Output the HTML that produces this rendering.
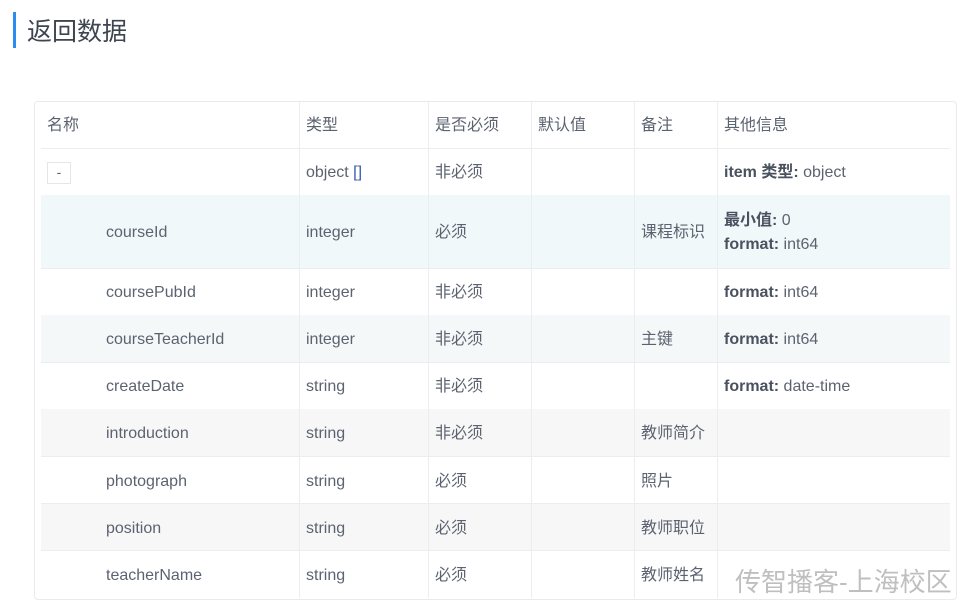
<!DOCTYPE html>
<html><head><meta charset="utf-8"><style>
body{margin:0;width:969px;height:604px;background:#fff;overflow:hidden;position:relative;font-family:"Liberation Sans","Noto Sans CJK SC",sans-serif;color:#5c6370;}
.bar{position:absolute;left:13px;top:12px;width:3px;height:36px;background:#2d8cf0;}
.title{position:absolute;left:27px;top:14px;font-size:25px;color:#3d4550;line-height:36px;}
.box{position:absolute;left:34px;top:101px;width:921px;height:497px;border:1px solid #e8eaec;border-radius:4px;}
.row{position:absolute;left:41px;width:909px;border-bottom:1px solid #ebedf0;}
.c{position:absolute;top:0;height:100%;display:flex;flex-direction:column;justify-content:center;font-size:16px;line-height:24px;white-space:nowrap;padding-top:3px;box-sizing:border-box;}
.vl{position:absolute;top:101px;height:497px;width:1px;background:#ebedf0;}
b{color:#4a5260;}
.btn{display:inline-block;width:22px;height:20px;border:1px solid #e4e6ea;text-align:center;line-height:18px;font-size:14px;}
</style></head><body>
<div class="bar"></div><div class="title">返回数据</div>
<div class="box"></div>

<div class="row" style="top:101px;height:47px"><div class="c" style="left:6px">名称</div><div class="c" style="left:265px">类型</div><div class="c" style="left:394px">是否必须</div><div class="c" style="left:497px">默认值</div><div class="c" style="left:600px">备注</div><div class="c" style="left:683px">其他信息</div></div>

<div class="row" style="top:148px;height:47px"><div class="c" style="left:6px"><div><span class="btn">-</span></div></div><div class="c" style="left:265px"><div>object <span style="color:#3a5ab0">[]</span></div></div><div class="c" style="left:394px">非必须</div><div class="c" style="left:683px"><div><b>item 类型:</b> object</div></div></div>

<div class="row" style="top:195px;height:73px;background:#f1f8fa"><div class="c" style="left:65px">courseId</div><div class="c" style="left:265px">integer</div><div class="c" style="left:394px">必须</div><div class="c" style="left:600px">课程标识</div><div class="c" style="left:683px"><div><b>最小值:</b> 0</div><div><b>format:</b> int64</div></div></div>

<div class="row" style="top:268px;height:47px"><div class="c" style="left:65px">coursePubId</div><div class="c" style="left:265px">integer</div><div class="c" style="left:394px">非必须</div><div class="c" style="left:683px"><div><b>format:</b> int64</div></div></div>

<div class="row" style="top:315px;height:47px;background:#f5f8f9"><div class="c" style="left:65px">courseTeacherId</div><div class="c" style="left:265px">integer</div><div class="c" style="left:394px">非必须</div><div class="c" style="left:600px">主键</div><div class="c" style="left:683px"><div><b>format:</b> int64</div></div></div>

<div class="row" style="top:362px;height:47px"><div class="c" style="left:65px">createDate</div><div class="c" style="left:265px">string</div><div class="c" style="left:394px">非必须</div><div class="c" style="left:683px"><div><b>format:</b> date-time</div></div></div>

<div class="row" style="top:409px;height:47px;background:#f7f7f7"><div class="c" style="left:65px">introduction</div><div class="c" style="left:265px">string</div><div class="c" style="left:394px">非必须</div><div class="c" style="left:600px">教师简介</div></div>

<div class="row" style="top:457px;height:46px"><div class="c" style="left:65px">photograph</div><div class="c" style="left:265px">string</div><div class="c" style="left:394px">必须</div><div class="c" style="left:600px">照片</div></div>

<div class="row" style="top:504px;height:46px;background:#f7f7f7"><div class="c" style="left:65px">position</div><div class="c" style="left:265px">string</div><div class="c" style="left:394px">必须</div><div class="c" style="left:600px">教师职位</div></div>

<div class="row" style="top:551px;height:47px;border-bottom:none"><div class="c" style="left:65px">teacherName</div><div class="c" style="left:265px">string</div><div class="c" style="left:394px">必须</div><div class="c" style="left:600px">教师姓名</div></div>

<div class="vl" style="left:299px"></div><div class="vl" style="left:428px"></div><div class="vl" style="left:531px"></div><div class="vl" style="left:634px"></div><div class="vl" style="left:717px"></div>

<div style="position:absolute;left:735px;top:564px;font-size:26px;line-height:36px;color:#bfbfbf;white-space:nowrap;">传智播客-上海校区</div>
</body></html>
